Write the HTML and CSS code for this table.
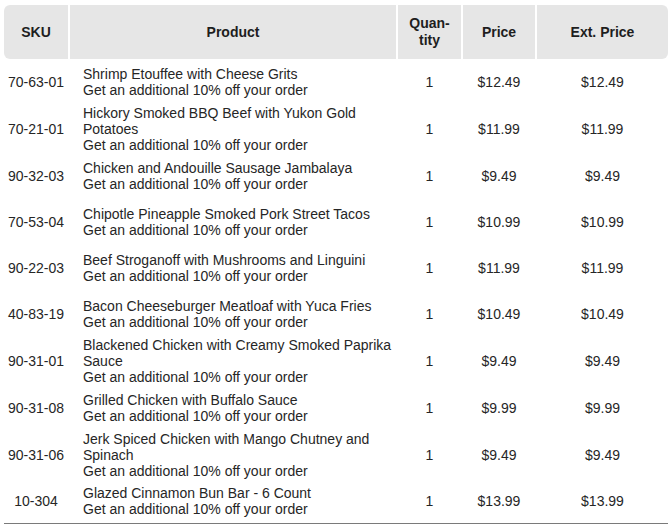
FILE: index.html
```
<!DOCTYPE html>
<html>
<head>
<meta charset="utf-8">
<link rel="stylesheet" href="styles.css">
</head>
<body>
<div class="wrap">
<table class="order">
  <thead>
    <tr>
      <th class="c-sku">SKU</th>
      <th class="c-prod">Product</th>
      <th class="c-qty">Quan-<br>tity</th>
      <th class="c-price">Price</th>
      <th class="c-ext">Ext. Price</th>
    </tr>
  </thead>
  <tbody>
    <tr><td class="c-sku">70-63-01</td><td class="c-prod">Shrimp Etouffee with Cheese Grits<br>Get an additional 10% off your order</td><td class="c-qty">1</td><td class="c-price">$12.49</td><td class="c-ext">$12.49</td></tr>
    <tr><td class="c-sku">70-21-01</td><td class="c-prod">Hickory Smoked BBQ Beef with Yukon Gold Potatoes<br>Get an additional 10% off your order</td><td class="c-qty">1</td><td class="c-price">$11.99</td><td class="c-ext">$11.99</td></tr>
    <tr><td class="c-sku">90-32-03</td><td class="c-prod">Chicken and Andouille Sausage Jambalaya<br>Get an additional 10% off your order</td><td class="c-qty">1</td><td class="c-price">$9.49</td><td class="c-ext">$9.49</td></tr>
    <tr><td class="c-sku">70-53-04</td><td class="c-prod">Chipotle Pineapple Smoked Pork Street Tacos<br>Get an additional 10% off your order</td><td class="c-qty">1</td><td class="c-price">$10.99</td><td class="c-ext">$10.99</td></tr>
    <tr><td class="c-sku">90-22-03</td><td class="c-prod">Beef Stroganoff with Mushrooms and Linguini<br>Get an additional 10% off your order</td><td class="c-qty">1</td><td class="c-price">$11.99</td><td class="c-ext">$11.99</td></tr>
    <tr><td class="c-sku">40-83-19</td><td class="c-prod">Bacon Cheeseburger Meatloaf with Yuca Fries<br>Get an additional 10% off your order</td><td class="c-qty">1</td><td class="c-price">$10.49</td><td class="c-ext">$10.49</td></tr>
    <tr><td class="c-sku">90-31-01</td><td class="c-prod">Blackened Chicken with Creamy Smoked Paprika Sauce<br>Get an additional 10% off your order</td><td class="c-qty">1</td><td class="c-price">$9.49</td><td class="c-ext">$9.49</td></tr>
    <tr><td class="c-sku">90-31-08</td><td class="c-prod">Grilled Chicken with Buffalo Sauce<br>Get an additional 10% off your order</td><td class="c-qty">1</td><td class="c-price">$9.99</td><td class="c-ext">$9.99</td></tr>
    <tr><td class="c-sku">90-31-06</td><td class="c-prod">Jerk Spiced Chicken with Mango Chutney and Spinach<br>Get an additional 10% off your order</td><td class="c-qty">1</td><td class="c-price">$9.49</td><td class="c-ext">$9.49</td></tr>
    <tr class="last"><td class="c-sku">10-304</td><td class="c-prod">Glazed Cinnamon Bun Bar - 6 Count<br>Get an additional 10% off your order</td><td class="c-qty">1</td><td class="c-price">$13.99</td><td class="c-ext">$13.99</td></tr>
  </tbody>
</table>
</div>
</body>
</html>
```
FILE: styles.css
```
html, body {
  margin: 0;
  background: #ffffff;
}
body {
  padding: 5px 4px 0 4px;
  font-family: "Liberation Sans", Arial, Helvetica, sans-serif;
  color: #262626;
}
.wrap {
  width: 664px;
  border-bottom: 1px solid #7a7a7a;
}
.order {
  border-collapse: separate;
  border-spacing: 2px 0;
  table-layout: fixed;
  width: 668px;
  margin: 0 -2px;
}
.order th {
  background: #e6e6e6;
  font-size: 14px;
  font-weight: bold;
  line-height: 17px;
  height: 54px;
  padding: 0;
  text-align: center;
  vertical-align: middle;
  color: #1e1e1e;
}
.order th:first-child {
  border-radius: 6px 0 0 6px;
}
.order th:last-child {
  border-radius: 0 6px 6px 0;
}
.order td {
  font-size: 14px;
  line-height: 16px;
  height: 46px;
  padding: 0;
  text-align: center;
  vertical-align: middle;
}
.order tr.last td {
  height: 44px;
}
.c-sku { width: 64px; }
.c-prod { width: 326px; }
.c-qty { width: 63px; }
.c-price { width: 72px; }
.c-ext { width: 131px; }
.order td.c-prod {
  text-align: left;
  padding: 0 2px 0 13px;
}
```
